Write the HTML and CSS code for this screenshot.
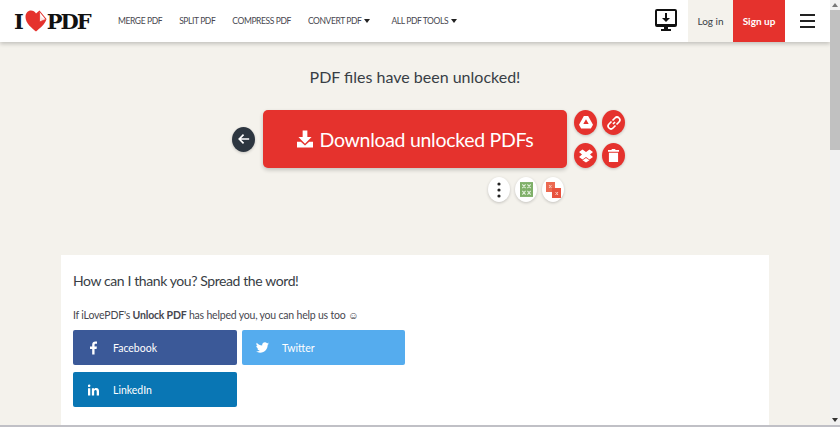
FILE: index.html
```html
<!DOCTYPE html>
<html lang="en">
<head>
    <meta charset="UTF-8">
    <meta name="viewport" content="width=device-width, initial-scale=1.0">
    <title>Unlock PDF - iLovePDF</title>
    <link rel="stylesheet" href="styles.css">
</head>
<body>

<div class="window">
<div class="page">
    <header class="topbar">
        <a class="logo" href="#">
            <span>I</span>
            <svg class="logo-heart" width="22" height="22" viewBox="0 0 22 22">
                <path d="M11 21.500 C7 18 .5 13.500 .5 7 C.5 3 3 .5 6 .5 C8 .5 10 1.500 11 3.500 L14.500 .5 L21.500 9 C20 14.500 15 18 11 21.500 Z" fill="#e5322d"/>
                <path d="M14.500 2 L14.500 12 L20.500 9.500 Z" fill="#fbe3e1" stroke="#e5322d" stroke-width=".8"/>
                <path d="M14.500 2 L16.500 7.500 L20.500 9.500 Z" fill="#fff"/>
            </svg>
            <span>PDF</span>
        </a>
        <nav class="nav">
            <a href="#">MERGE PDF</a>
            <a href="#">SPLIT PDF</a>
            <a href="#">COMPRESS PDF</a>
            <a href="#" class="has-caret">CONVERT PDF</a>
            <a href="#" class="has-caret">ALL PDF TOOLS</a>
        </nav>
        <div class="topbar-right">
            <a class="desktop-link" href="#">
                <svg width="22" height="24" viewBox="0 0 22 24">
                    <path d="M2 0 H20 A2 2 0 0 1 22 2 V16 A2 2 0 0 1 20 18 H2 A2 2 0 0 1 0 16 V2 A2 2 0 0 1 2 0 Z M2 2 V15 H20 V2 Z" fill="#111" fill-rule="evenodd"/>
                    <path d="M10 4 H12 V9 H15 L11 13 L7 9 H10 Z" fill="#111"/>
                    <path d="M9 18 H13 V20 H16 V22 H6 V20 H9 Z" fill="#111"/>
                </svg>
            </a>
            <a class="login" href="#">Log in</a>
            <a class="signup" href="#">Sign up</a>
            <a class="burger" href="#"><span></span><span></span><span></span></a>
        </div>
    </header>

    <main class="content">
        <h2 class="result-title">PDF files have been unlocked!</h2>

        <div class="download-grid">
            <div class="download-left">
                <a class="circle circle-dark" href="#">
                    <svg width="12" height="12" viewBox="0 0 14 14"><path d="M6.500 2 L1.500 7 L6.500 12 M2 7 H13" fill="none" stroke="#fff" stroke-width="2"/></svg>
                </a>
            </div>
            <a class="download-btn" href="#">
                <svg width="16" height="18" viewBox="0 0 17 18">
                    <path d="M6 0 H11 V7 H15.500 L8.500 14 L1.500 7 H6 Z" fill="#fff"/>
                    <path d="M0 12 H4 L8.500 16 L13 12 H17 V18 H0 Z" fill="#fff"/>
                </svg>
                <span>Download unlocked PDFs</span>
            </a>
            <div class="download-right">
                <a class="circle circle-red" href="#">
                    <svg width="14" height="13" viewBox="0 0 13 12"><path d="M4.500 0 H8.500 L13 8 L11 11.500 H2 L0 8 Z M6.500 3 L4 7.500 H9 Z" fill="#fff" fill-rule="evenodd"/></svg>
                </a>
                <a class="circle circle-red" href="#">
                    <svg width="14" height="14" viewBox="0 0 14 14"><path d="M6 8 L8 6 M5.500 4.500 L8 2 A2.600 2.600 0 0 1 12 6 L9.500 8.500 M8.500 9.500 L6 12 A2.600 2.600 0 0 1 2 8 L4.500 5.500" fill="none" stroke="#fff" stroke-width="1.700"/></svg>
                </a>
                <a class="circle circle-red" href="#">
                    <svg width="14" height="14" viewBox="0 0 14 13"><path d="M3.500 0 L7 2.500 L10.500 0 L14 2.500 L11 5 L14 7.500 L10.500 10 L7 7.500 L3.500 10 L0 7.500 L3 5 L0 2.500 Z M3.500 10.800 L7 8.500 L10.500 10.800 L7 13 Z" fill="#fff"/></svg>
                </a>
                <a class="circle circle-red" href="#">
                    <svg width="11" height="15" viewBox="0 0 12 14"><path d="M4 0 H8 V1 H12 V3 H0 V1 H4 Z M1 4 H11 V14 H1 Z" fill="#fff"/></svg>
                </a>
            </div>
            <div class="tool-row">
                <a class="circle circle-white" href="#">
                    <svg width="4" height="16" viewBox="0 0 4 16"><circle cx="2" cy="2" r="1.600" fill="#222"/><circle cx="2" cy="8" r="1.600" fill="#222"/><circle cx="2" cy="14" r="1.600" fill="#222"/></svg>
                </a>
                <a class="circle circle-white" href="#">
                    <svg width="13" height="15" viewBox="0 0 14 16">
                        <rect width="14" height="16" fill="#7fb069"/>
                        <path d="M2.500 2.500 L6 6.500 M6 2.500 L2.500 6.500 M8 2.500 L11.500 6.500 M11.500 2.500 L8 6.500 M2.500 9.500 L6 13.500 M6 9.500 L2.500 13.500 M8 9.500 L11.500 13.500 M11.500 9.500 L8 13.500" stroke="#e3f0dc" stroke-width="1.200"/>
                    </svg>
                </a>
                <a class="circle circle-white" href="#">
                    <svg width="15" height="16" viewBox="0 0 15 16">
                        <rect x="0" y="0" width="9" height="10" fill="#ec6a52"/>
                        <rect x="6" y="6" width="9" height="10" fill="#e8533f"/>
                        <path d="M3 3 L5.500 6 M5.500 3 L3 6 M9.500 10 L12 13 M12 10 L9.500 13" stroke="#f9c9bd" stroke-width="1"/>
                    </svg>
                </a>
            </div>
        </div>

        <section class="share-card">
            <h3>How can I thank you? Spread the word!</h3>
            <p>If iLovePDF's <b>Unlock PDF</b> has helped you, you can help us too &#9786;</p>
            <div class="share-buttons">
                <a class="share-btn facebook" href="#">
                    <span class="share-icon">
                        <svg width="7" height="14" viewBox="0 0 8 15"><path d="M2.500 15 V8.500 H0 V5.700 H2.500 V3.700 C2.500 1.300 4 0 6 0 H8 V2.600 H6.600 C5.500 2.600 5.200 3.100 5.200 4 V5.700 H7.900 L7.500 8.500 H5.200 V15 Z" fill="#fff"/></svg>
                    </span>
                    <span>Facebook</span>
                </a>
                <a class="share-btn twitter" href="#">
                    <span class="share-icon">
                        <svg width="13" height="11" viewBox="0 0 15 12"><path d="M15 1.400 C14.500 1.700 13.900 1.800 13.200 1.900 C13.900 1.500 14.400 .9 14.600 .2 C14 .6 13.300 .8 12.700 1 C12.100 .4 11.300 0 10.300 0 C8.500 0 7.100 1.400 7.100 3.100 C7.100 3.400 7.100 3.600 7.200 3.800 C4.600 3.700 2.300 2.400 .8 .6 C.1 1.900 .4 3.500 1.700 4.300 C1.200 4.300 .7 4.200 .3 4 C.3 5.500 1.400 6.800 2.800 7.100 C2.300 7.200 1.900 7.200 1.400 7.100 C1.800 8.400 3 9.300 4.500 9.300 C3.100 10.400 1.500 10.900 0 10.700 C1.400 11.500 3 12 4.700 12 C10.400 12 13.500 7.300 13.500 3.200 V2.900 C14.100 2.500 14.600 2 15 1.400 Z" fill="#fff"/></svg>
                    </span>
                    <span>Twitter</span>
                </a>
                <a class="share-btn linkedin" href="#">
                    <span class="share-icon">
                        <svg width="11" height="12" viewBox="0 0 12 12"><path d="M0 4 H2.500 V12 H0 Z M1.250 0 A1.400 1.400 0 1 1 1.250 2.800 A1.400 1.400 0 0 1 1.250 0 Z M4.200 4 H6.600 V5.100 C7 4.400 7.800 3.800 9 3.800 C11.300 3.800 12 5.200 12 7.300 V12 H9.500 V7.800 C9.500 6.800 9.300 6 8.200 6 C7.100 6 6.700 6.800 6.700 7.800 V12 H4.200 Z" fill="#fff"/></svg>
                    </span>
                    <span>LinkedIn</span>
                </a>
            </div>
        </section>
    </main>
</div>

<div class="scrollbar">
    <div class="scroll-arrow scroll-up"></div>
    <div class="scroll-thumb"></div>
    <div class="scroll-arrow scroll-down"></div>
</div>
</div>
<div class="scrollbar-bottom"></div>

</body>
</html>
```

FILE: styles.css
```css
html, body {
    height: 100%;
}
body {
    margin: 0;
    display: flex;
    flex-direction: column;
    overflow: hidden;
    font-family: 'Lato', 'Open Sans', sans-serif;
    background-color: #f4f2ec;
    color: #383e45;
}
a {
    color: inherit;
    text-decoration: none;
}
.window {
    flex: 1;
    min-height: 0;
    display: flex;
}
.page {
    flex: 1;
    min-width: 0;
    display: flex;
    flex-direction: column;
}

/* top bar */
.topbar {
    flex: none;
    height: 42px;
    display: flex;
    align-items: center;
    background: #fff;
    box-shadow: 0 2px 4px rgba(0, 0, 0, 0.2);
    position: relative;
    z-index: 10;
}
.logo {
    flex: none;
    width: 75px;
    display: flex;
    align-items: center;
    margin-left: 14px;
    font-family: 'DejaVu Serif', serif;
    font-weight: 700;
    font-size: 21px;
    letter-spacing: -2px;
    color: #111;
}
.logo-heart {
    flex: none;
    margin: 0 0 0 3px;
}
.nav {
    display: flex;
    gap: 17px;
    margin-left: 29px;
    font-size: 8.500px;
    letter-spacing: -0.4px;
    color: #47474f;
}
.has-caret::after {
    content: "";
    display: inline-block;
    margin-left: 3px;
    vertical-align: 1px;
    border-left: 3px solid transparent;
    border-right: 3px solid transparent;
    border-top: 4px solid #222;
}
.nav .has-caret:last-child {
    margin-left: 4px;
}
.topbar-right {
    margin-left: auto;
    height: 100%;
    display: flex;
    align-items: center;
}
.desktop-link {
    display: flex;
    margin-right: 11px;
}
.login {
    width: 45px;
    align-self: stretch;
    display: flex;
    align-items: center;
    justify-content: center;
    background: #f4f2ec;
    font-size: 10px;
    color: #383e45;
}
.signup {
    width: 52px;
    align-self: stretch;
    display: flex;
    align-items: center;
    justify-content: center;
    background: #e5322d;
    color: #fff;
    font-size: 10px;
    font-weight: 700;
}
.burger {
    width: 45px;
    display: flex;
    flex-direction: column;
    align-items: center;
    gap: 4px;
}
.burger span {
    width: 15px;
    height: 2px;
    background: #222;
}

/* result area */
.content {
    flex: 1;
}
.result-title {
    margin: 24px 0 22px 0;
    text-align: center;
    font-size: 16px;
    line-height: 22px;
    font-weight: 400;
    color: #383e45;
}
.download-grid {
    display: grid;
    grid-template-columns: 1fr 304px 1fr;
    column-gap: 7px;
    row-gap: 9px;
}
.download-left {
    display: flex;
    justify-content: flex-end;
    align-items: center;
    padding-right: 1px;
}
.download-btn {
    height: 58px;
    display: flex;
    align-items: center;
    justify-content: center;
    gap: 7px;
    background: #e5322d;
    border-radius: 5px;
    box-shadow: 0 2px 4px rgba(0, 0, 0, 0.2);
    color: #fff;
    font-size: 19.500px;
    letter-spacing: -0.3px;
}
.download-right {
    display: grid;
    grid-template-columns: 23px 23px;
    gap: 8px 5px;
    align-content: center;
    justify-content: start;
}
.tool-row {
    grid-column: 2;
    display: flex;
    justify-content: flex-end;
    gap: 5px;
    padding-right: 3px;
}
.circle {
    width: 23px;
    height: 25px;
    border-radius: 50%;
    display: flex;
    align-items: center;
    justify-content: center;
    box-shadow: 0 1px 3px rgba(0, 0, 0, 0.2);
}
.circle-dark {
    background: #2d3640;
}
.circle-red {
    background: #e5322d;
}
.circle-white {
    width: 22px;
    background: #fff;
}

/* share card */
.share-card {
    width: 684px;
    margin: 53px auto 0 auto;
    padding: 16px 12px 20px 12px;
    background: #fff;
}
.share-card h3 {
    margin: 0 0 16px 0;
    font-size: 14px;
    line-height: 20px;
    font-weight: 400;
    letter-spacing: -0.4px;
    color: #383e45;
}
.share-card p {
    margin: 0 0 7px 0;
    font-size: 10.500px;
    line-height: 16px;
    letter-spacing: -0.2px;
    color: #47474f;
}
.share-buttons {
    display: grid;
    grid-template-columns: 164px 163px;
    gap: 7px 5px;
}
.share-btn {
    height: 35px;
    display: flex;
    align-items: center;
    border-radius: 2px;
    color: #fff;
    font-size: 10.500px;
}
.share-icon {
    flex: none;
    width: 40px;
    display: flex;
    justify-content: center;
}
.facebook {
    background: #3b5998;
}
.twitter {
    background: #55acee;
}
.linkedin {
    background: #0976b4;
}

/* scrollbars */
.scrollbar {
    flex: none;
    width: 10px;
    display: flex;
    flex-direction: column;
    background: #f1f1f1;
    position: relative;
    z-index: 20;
}
.scroll-arrow {
    height: 10px;
    display: flex;
    align-items: center;
    justify-content: center;
}
.scroll-up::after {
    content: "";
    border-left: 3px solid transparent;
    border-right: 3px solid transparent;
    border-bottom: 4px solid #777;
}
.scroll-thumb {
    height: 140px;
    background: #c1c1c1;
}
.scroll-down {
    margin-top: auto;
}
.scroll-down::after {
    content: "";
    border-left: 3px solid transparent;
    border-right: 3px solid transparent;
    border-top: 4px solid #333;
}
.scrollbar-bottom {
    flex: none;
    height: 2px;
    background: #c0c0c6;
}
```
